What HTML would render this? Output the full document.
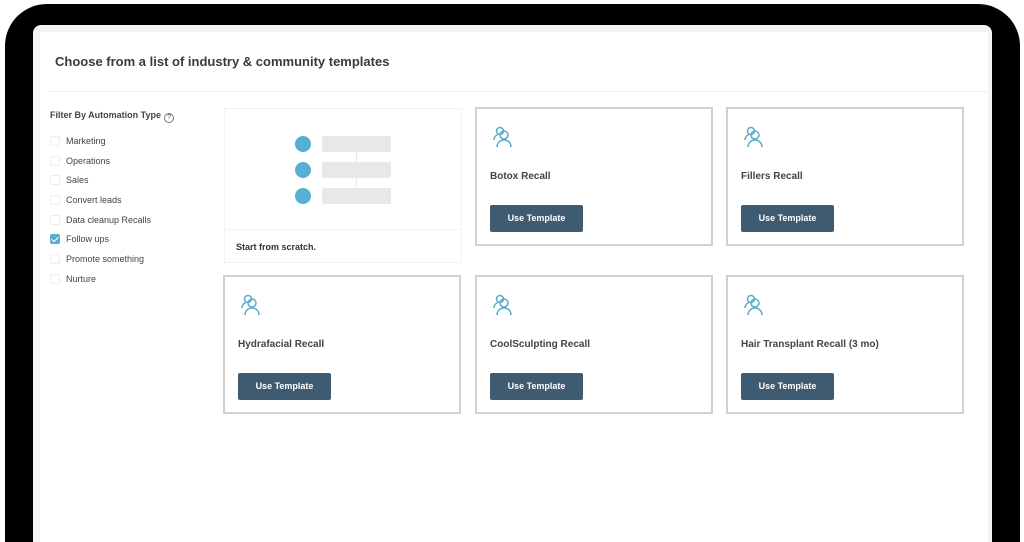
<!DOCTYPE html>
<html><head><style>
*{margin:0;padding:0;box-sizing:border-box}
html,body{width:1024px;height:542px;overflow:hidden}
body{background:#fff;font-family:"Liberation Sans",sans-serif;color:#333}
#w{position:relative;width:1024px;height:542px;overflow:hidden}
.bezel{position:absolute;left:5px;top:4px;width:1015px;height:538px;background:#000;border-radius:42px 42px 0 0}
.screen{position:absolute;left:33px;top:25px;width:959px;height:517px;background:#f4f4f4;border-radius:8px 8px 0 0}
.panel{position:absolute;left:40px;top:32px;width:948px;height:510px;background:#fff}
.hdr{position:absolute;left:55px;top:54px;font-size:13px;font-weight:bold;color:#3a3a3a}
.line{position:absolute;left:48px;top:91px;width:940px;height:1px;background:#eee}
.ft{position:absolute;left:50px;top:110px;font-size:9px;font-weight:bold;color:#444}
.q{display:inline-block;width:10px;height:10px;border:1px solid #777;border-radius:50%;font-size:7px;text-align:center;line-height:8px;margin-left:3px;vertical-align:-1px;font-weight:normal}
.cb{position:absolute;left:50px;font-size:9px;color:#444}
.cb i{display:inline-block;width:10px;height:10px;border:1px solid #eee;border-radius:2px;vertical-align:-2px;margin-right:6px;position:relative}
.cb i.on{background:#5aaecb;border-color:#5aaecb}
.cb i.on:after{content:"";position:absolute;left:2px;top:0px;width:3px;height:6px;border:solid #fff;border-width:0 1.5px 1.5px 0;transform:rotate(45deg)}
.card{position:absolute;width:238px;height:139px;border:2px solid #d0d0d0;background:#fff}
.card .ic{position:absolute;left:15px;top:16px}
.card .t{position:absolute;left:13px;top:62px;font-size:10px;font-weight:bold;color:#444}
.card .b{position:absolute;left:13px;top:96px;width:93px;height:27px;background:#3f5b72;border-radius:2px;color:#fff;font-size:9px;font-weight:bold;text-align:center;line-height:27px}
.scr{position:absolute;left:224px;top:108px;width:238px;height:155px;border:1px solid #f2f2f2;background:#fff}
.dot{position:absolute;left:295px;width:16px;height:16px;border-radius:50%;background:#55b0d4}
.bar{position:absolute;left:322px;width:69px;height:16px;background:#e8e8e8;border-radius:2px}
</style></head><body><div id="w">
<div class="bezel"></div><div class="screen"></div><div class="panel"></div>
<div class="hdr">Choose from a list of industry &amp; community templates</div>
<div class="line"></div>
<div class="ft">Filter By Automation Type<span class="q">?</span></div>
<div class="cb" style="top:136px"><i></i>Marketing</div>
<div class="cb" style="top:156px"><i></i>Operations</div>
<div class="cb" style="top:175px"><i></i>Sales</div>
<div class="cb" style="top:195px"><i></i>Convert leads</div>
<div class="cb" style="top:215px"><i></i>Data cleanup Recalls</div>
<div class="cb" style="top:234px"><i class="on"></i>Follow ups</div>
<div class="cb" style="top:254px"><i></i>Promote something</div>
<div class="cb" style="top:274px"><i></i>Nurture</div>
<div class="scr"></div>
<div style="position:absolute;left:226px;top:229px;width:234px;height:1px;background:#f2f2f2"></div>
<div style="position:absolute;left:356px;top:144px;width:1px;height:50px;background:#e8e8e8"></div>
<div class="dot" style="top:136px"></div><div class="bar" style="top:136px"></div>
<div class="dot" style="top:162px"></div><div class="bar" style="top:162px"></div>
<div class="dot" style="top:188px"></div><div class="bar" style="top:188px"></div>
<div style="position:absolute;left:236px;top:242px;font-size:9px;font-weight:bold;color:#333">Start from scratch.</div>
<svg width="0" height="0" style="position:absolute"><defs><g id="p" fill="none" stroke="#5aaecb" stroke-width="1.5"><circle cx="8" cy="6" r="3.5"/><path d="M2 15c0-3 2-5 4-5.5"/><circle cx="12" cy="10" r="4"/><path d="M5 22c0-4 3-7 7-7s7 3 7 7"/></g></defs></svg>
<div class="card" style="left:475px;top:107px"><svg class="ic" width="22" height="24"><use href="#p"/></svg><div class="t">Botox Recall</div><div class="b">Use Template</div></div>
<div class="card" style="left:726px;top:107px"><svg class="ic" width="22" height="24"><use href="#p"/></svg><div class="t">Fillers Recall</div><div class="b">Use Template</div></div>
<div class="card" style="left:223px;top:275px"><svg class="ic" width="22" height="24"><use href="#p"/></svg><div class="t">Hydrafacial Recall</div><div class="b">Use Template</div></div>
<div class="card" style="left:475px;top:275px"><svg class="ic" width="22" height="24"><use href="#p"/></svg><div class="t">CoolSculpting Recall</div><div class="b">Use Template</div></div>
<div class="card" style="left:726px;top:275px"><svg class="ic" width="22" height="24"><use href="#p"/></svg><div class="t">Hair Transplant Recall (3 mo)</div><div class="b">Use Template</div></div>
</div></body></html>
